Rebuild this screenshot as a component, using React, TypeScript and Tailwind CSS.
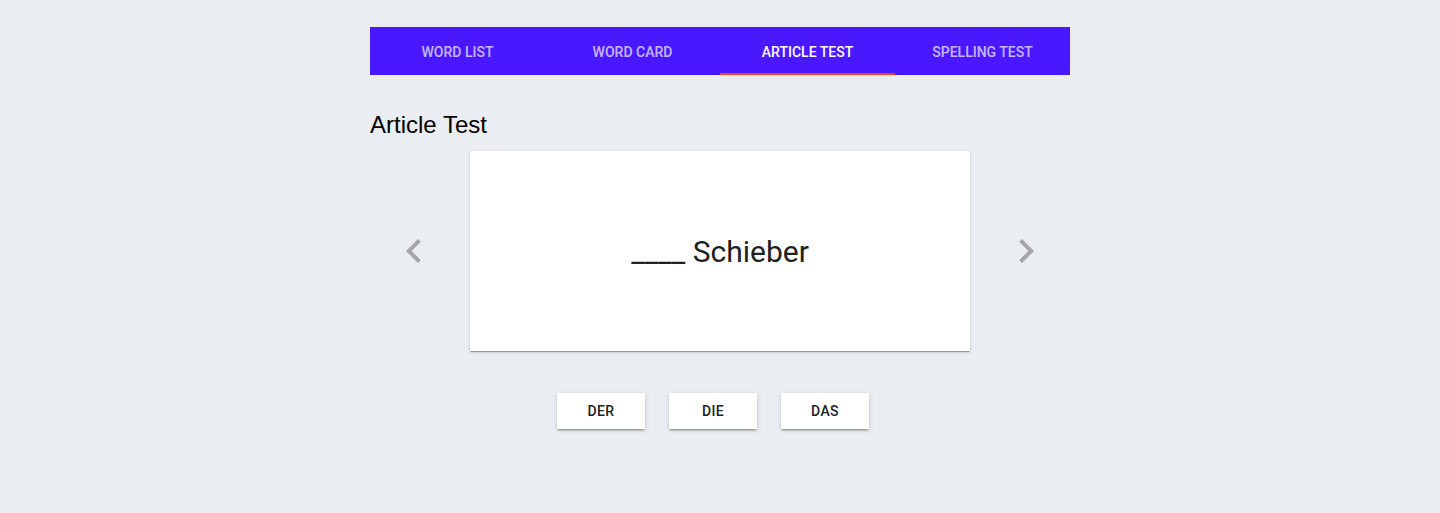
import { useState } from 'react';

const tabs = ['Word List', 'Word Card', 'Article Test', 'Spelling Test'];
const articles = ['der', 'die', 'das'];

export default function App() {
  const [active, setActive] = useState(2);

  return (
    <div className="min-h-[513px] bg-[#eaeef2] pt-[27px] font-['Roboto',sans-serif]">
      <div className="mx-auto w-[700px]">
        {/* Tabs */}
        <div className="flex h-12 bg-[#4a18ff]">
          {tabs.map((tab, idx) => (
            <button
              key={tab}
              onClick={() => setActive(idx)}
              className={`relative flex-1 pt-[2px] text-sm font-medium uppercase ${
                idx === active ? 'text-white' : 'text-white/70'
              }`}
            >
              {tab}
              {idx === active && (
                <span className="absolute bottom-0 left-0 h-[2px] w-full bg-[#ff3d1f]" />
              )}
            </button>
          ))}
        </div>

        <h2 className="mt-9 mb-3 font-['Liberation_Sans',Arial,sans-serif] text-2xl leading-[28px] text-black">
          Article Test
        </h2>

        {/* Card with arrows */}
        <div className="flex items-center justify-center gap-8">
          <button className="h-12 w-12 text-[#a3a5a8]">
            <svg viewBox="0 0 24 24" width="48" height="48" fill="currentColor">
              <path d="M15.41 7.41L14 6l-6 6 6 6 1.41-1.41L10.83 12z" />
            </svg>
          </button>
          <div className="flex h-[200px] w-[500px] items-center justify-center bg-white shadow-[0px_2px_1px_-1px_rgba(0,0,0,0.2),0px_1px_1px_0px_rgba(0,0,0,0.14),0px_1px_3px_0px_rgba(0,0,0,0.12)]">
            <span className="text-[30px] text-[#212121]">____ Schieber</span>
          </div>
          <button className="h-12 w-12 text-[#a3a5a8]">
            <svg viewBox="0 0 24 24" width="48" height="48" fill="currentColor">
              <path d="M10 6L8.59 7.41 13.17 12l-4.58 4.59L10 18l6-6z" />
            </svg>
          </button>
        </div>

        {/* Answer buttons */}
        <div className="mt-[42px] flex justify-center gap-6 pr-[14px]">
          {articles.map((a) => (
            <button
              key={a}
              className="h-9 w-[88px] bg-white text-sm font-medium uppercase tracking-[0.02857em] text-[#212121] shadow-[0px_3px_1px_-2px_rgba(0,0,0,0.2),0px_2px_2px_0px_rgba(0,0,0,0.14),0px_1px_5px_0px_rgba(0,0,0,0.12)]"
            >
              {a}
            </button>
          ))}
        </div>
      </div>
    </div>
  );
}
